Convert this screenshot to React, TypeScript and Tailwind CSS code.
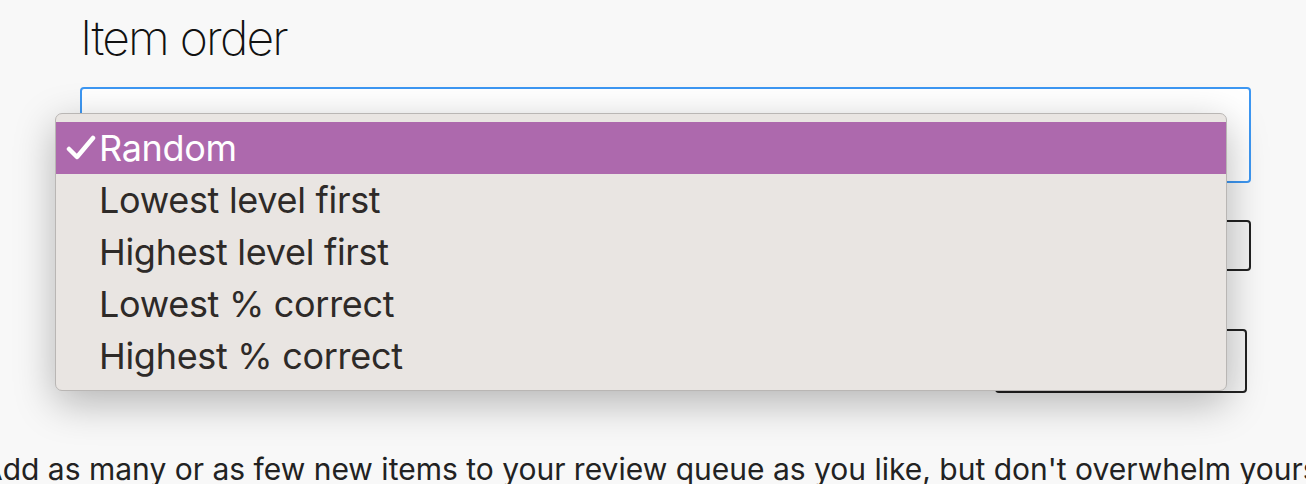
import React from "react";

const items = [
  "Random",
  "Lowest level first",
  "Highest level first",
  "Lowest % correct",
  "Highest % correct",
];

export default function App() {
  return (
    <div
      className="relative w-[1306px] h-[484px] overflow-hidden bg-[#f8f8f8] text-[#222]"
      style={{ fontFamily: "Inter, 'Noto Sans', sans-serif" }}
    >
      <div className="pl-[80px] pr-[55px] pt-[10px]">
        <h2 className="text-[48px] font-extralight leading-[56px] tracking-[-1.8px] text-[#111]">
          Item order
        </h2>
        <div className="mt-[21px] h-[96px] rounded-[4px] border-2 border-[#3d97f2] bg-white" />
        <div className="mt-[37px] h-[51px] rounded-[4px] border-2 border-[#222] bg-[#f3f3f3]" />
        <div className="mt-[58px] flex justify-end pr-[4px]">
          <div className="h-[64px] w-[252px] rounded-[4px] border-2 border-[#222] bg-[#f5f5f5]" />
        </div>
      </div>
      <p className="ml-[-18px] mt-[58px] whitespace-nowrap text-[30px] leading-[36px] text-[#222]">
        Add as many or as few new items to your review queue as you like, but don't overwhelm yourself.
      </p>

      <div className="absolute left-[55px] top-[113px] w-[1172px] rounded-[7px] border border-[#b9b6b4] bg-[#e9e5e2] py-[8px] shadow-[0_12px_40px_rgba(0,0,0,0.28)]">
        {items.map((label, i) => (
          <div
            key={label}
            className={
              i === 0
                ? "flex h-[52px] items-center bg-[#ad69ad] text-white"
                : "flex h-[52px] items-center text-[#2e2a28]"
            }
          >
            <span className="flex w-[43px] justify-end pr-[3px]">
              {i === 0 && (
                <svg width="30" height="26" viewBox="0 0 30 26">
                  <path
                    d="M3 14 L11 22 L27 3"
                    fill="none"
                    stroke="white"
                    strokeWidth="4.5"
                    strokeLinecap="round"
                    strokeLinejoin="round"
                  />
                </svg>
              )}
            </span>
            <span className="text-[36px] leading-none tracking-[-0.3px]">{label}</span>
          </div>
        ))}
      </div>
    </div>
  );
}
